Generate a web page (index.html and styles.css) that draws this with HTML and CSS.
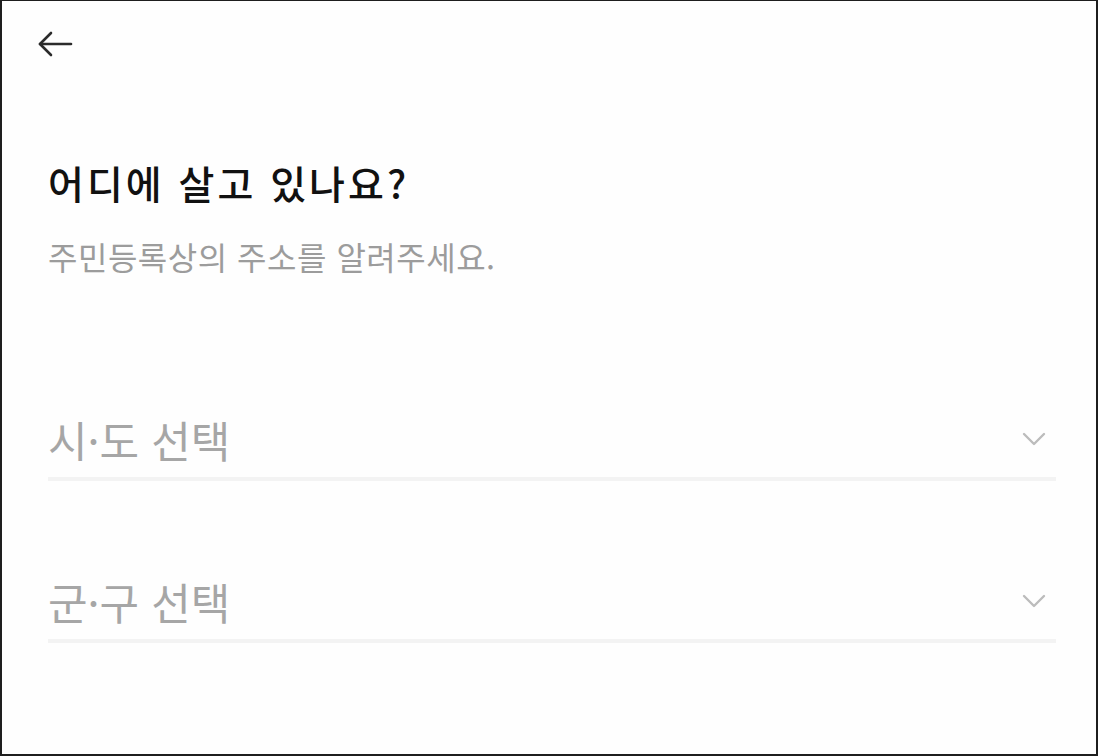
FILE: index.html
```html
<!DOCTYPE html>
<html lang="ko">
<head>
  <meta charset="UTF-8">
  <title>주소 입력</title>
  <link rel="stylesheet" href="styles.css">
</head>
<body>

  <div class="screen">
    <div class="topbar">
      <button type="button" class="back" aria-label="뒤로">
        <svg width="36" height="26" viewBox="0 0 36 26" fill="none" stroke="#2b2b2b" stroke-width="2.6" stroke-linecap="round" stroke-linejoin="round">
          <path d="M34 13H3"/>
          <path d="M14 2L3 13L14 24"/>
        </svg>
      </button>
    </div>

    <div class="intro">
      <h1 class="title">어디에 살고 있나요?</h1>
      <p class="subtitle">주민등록상의 주소를 알려주세요.</p>
    </div>

    <div class="fields">
      <div class="select">
        <span class="placeholder">시·도 선택</span>
        <svg class="chevron" width="24" height="14" viewBox="0 0 24 14" fill="none" stroke="#bcbcbc" stroke-width="2.4" stroke-linecap="round" stroke-linejoin="round">
          <polyline points="2,2 12,12 22,2"/>
        </svg>
      </div>
      <div class="select">
        <span class="placeholder">군·구 선택</span>
        <svg class="chevron" width="24" height="14" viewBox="0 0 24 14" fill="none" stroke="#bcbcbc" stroke-width="2.4" stroke-linecap="round" stroke-linejoin="round">
          <polyline points="2,2 12,12 22,2"/>
        </svg>
      </div>
    </div>
  </div>

</body>
</html>
```

FILE: styles.css
```css
body {
  margin: 0;
  font-family: "Noto Sans CJK KR", sans-serif;
  background: #fff;
}

.screen {
  height: 756px;
  box-sizing: border-box;
  border: 2px solid #1e1e1e;
  border-top-width: 1px;
  background: #fefefe;
}

.topbar {
  padding: 30px 0 0 35px;
  height: 60px;
}

.back {
  display: block;
  padding: 0;
  border: none;
  background: none;
  cursor: pointer;
}

.intro {
  padding: 67px 40px 0 46px;
}

.title {
  margin: 0;
  font-size: 39px;
  font-weight: 500;
  line-height: 48px;
  letter-spacing: 3px;
  color: #111;
}

.subtitle {
  margin: 30px 0 0;
  font-size: 32px;
  line-height: 40px;
  letter-spacing: 0.5px;
  color: #9c9c9c;
}

.fields {
  padding: 0 40px 0 46px;
  margin-top: 125px;
  display: flex;
  flex-direction: column;
  gap: 82px;
}

.select {
  height: 76px;
  display: flex;
  align-items: center;
  justify-content: space-between;
  border-bottom: 4px solid #f3f3f3;
  cursor: pointer;
}

.placeholder {
  font-size: 43px;
  line-height: 1;
  color: #a6a6a6;
}

.chevron {
  margin-right: 10px;
}
```
